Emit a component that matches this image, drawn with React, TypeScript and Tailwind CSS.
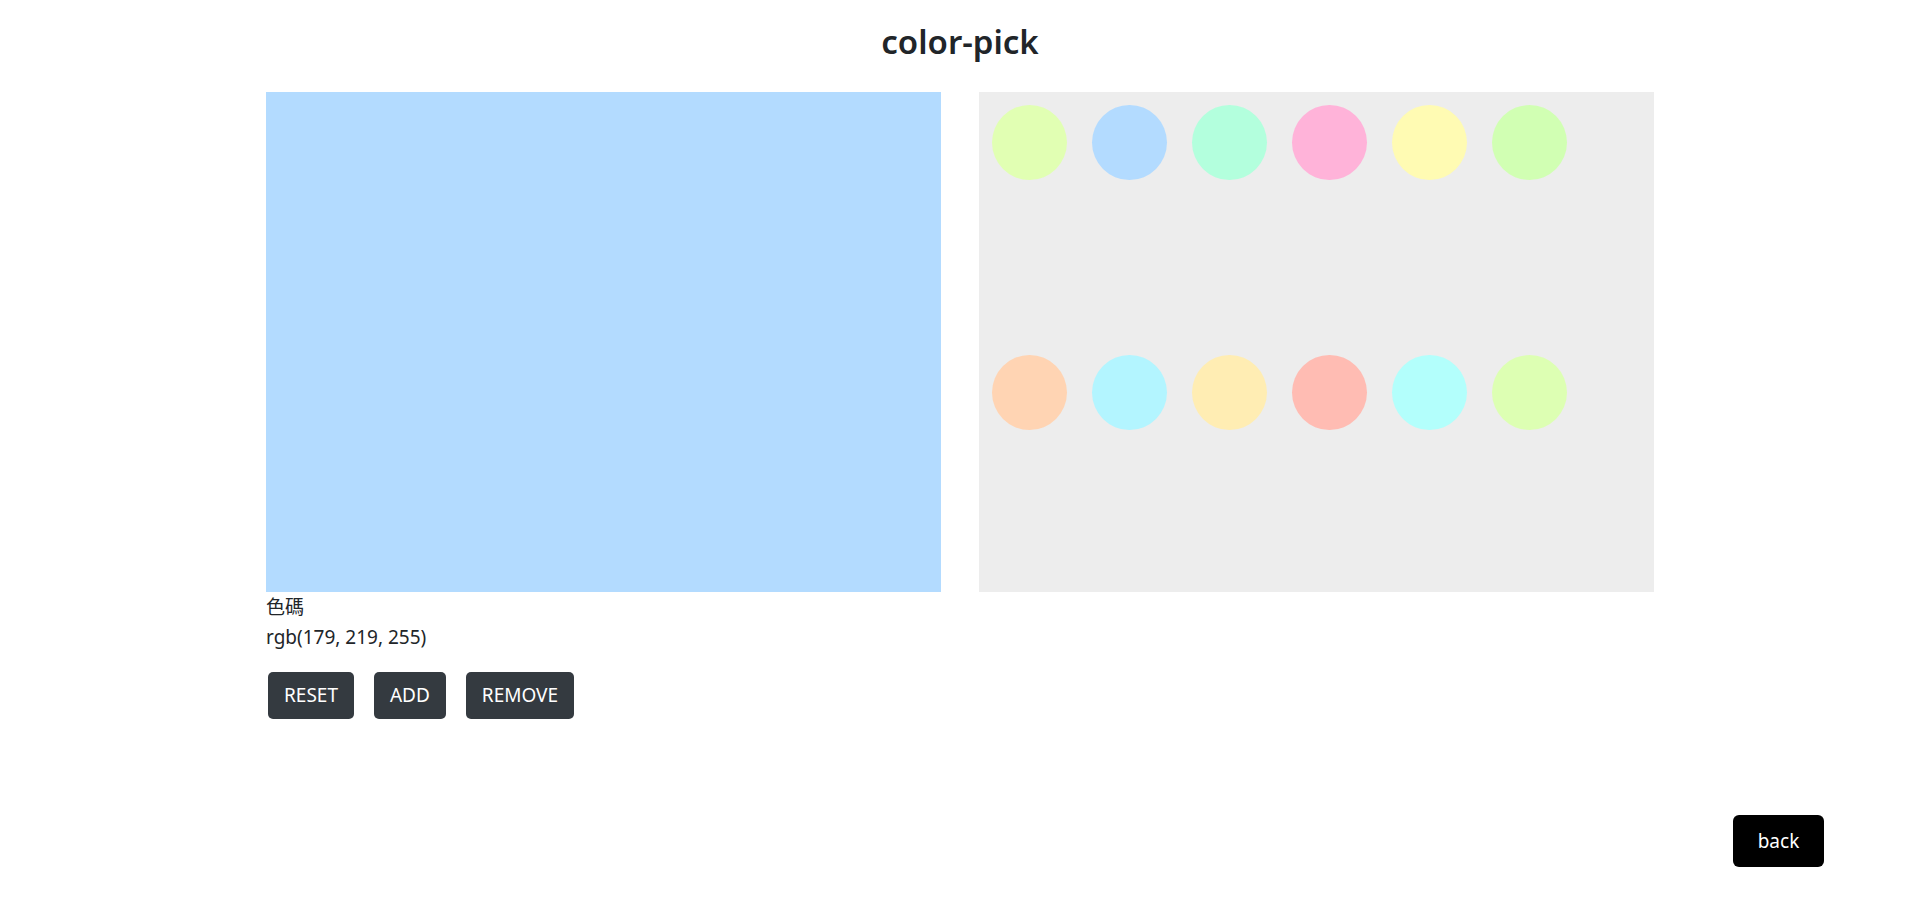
import React from "react";

const swatches = [
  "#e1ffb3",
  "#b3dbff",
  "#b3ffdd",
  "#ffb3d9",
  "#fffbb3",
  "#d1ffb3",
  "#ffd4b3",
  "#b3f5ff",
  "#ffedb3",
  "#ffbcb3",
  "#b3fffc",
  "#ddffb3",
];

export default function App() {
  const current = "rgb(179, 219, 255)";

  return (
    <div className="flex h-[898px] flex-col bg-white font-['Noto_Sans',sans-serif] text-[#212529]">
      <h2 className="pt-[22px] pb-[30px] text-center text-[33px] font-semibold leading-[40px]">color-pick</h2>

      <div className="mx-auto w-[1388px]">
        <div className="flex gap-[38px]">
          <div className="flex w-[675px] flex-col">
            <div className="h-[500px] w-full" style={{ backgroundColor: current }} />
            <p className="text-[19px] leading-[30px] font-['Noto_Sans','Noto_Sans_CJK_TC',sans-serif]">色碼</p>
            <p className="text-[19px] leading-[30px]">{current}</p>
            <div className="mt-[20px] flex gap-5 pl-[2px]">
              <button className="h-[47px] rounded-[5px] bg-[#343a40] px-4 text-[19px] text-white">RESET</button>
              <button className="h-[47px] rounded-[5px] bg-[#343a40] px-4 text-[19px] text-white">ADD</button>
              <button className="h-[47px] rounded-[5px] bg-[#343a40] px-4 text-[19px] text-white">REMOVE</button>
            </div>
          </div>

          <div className="flex h-[500px] w-[675px] flex-wrap content-stretch bg-[#ededed]">
            {swatches.map((c) => (
              <div key={c} className="m-[12.5px] h-[75px] w-[75px] rounded-full" style={{ backgroundColor: c }} />
            ))}
          </div>
        </div>
      </div>

      <div className="mt-auto flex justify-end pr-[96px] pb-[31px]">
        <button className="h-[52px] w-[91px] rounded-[6px] bg-black text-[19px] text-white">back</button>
      </div>
    </div>
  );
}
